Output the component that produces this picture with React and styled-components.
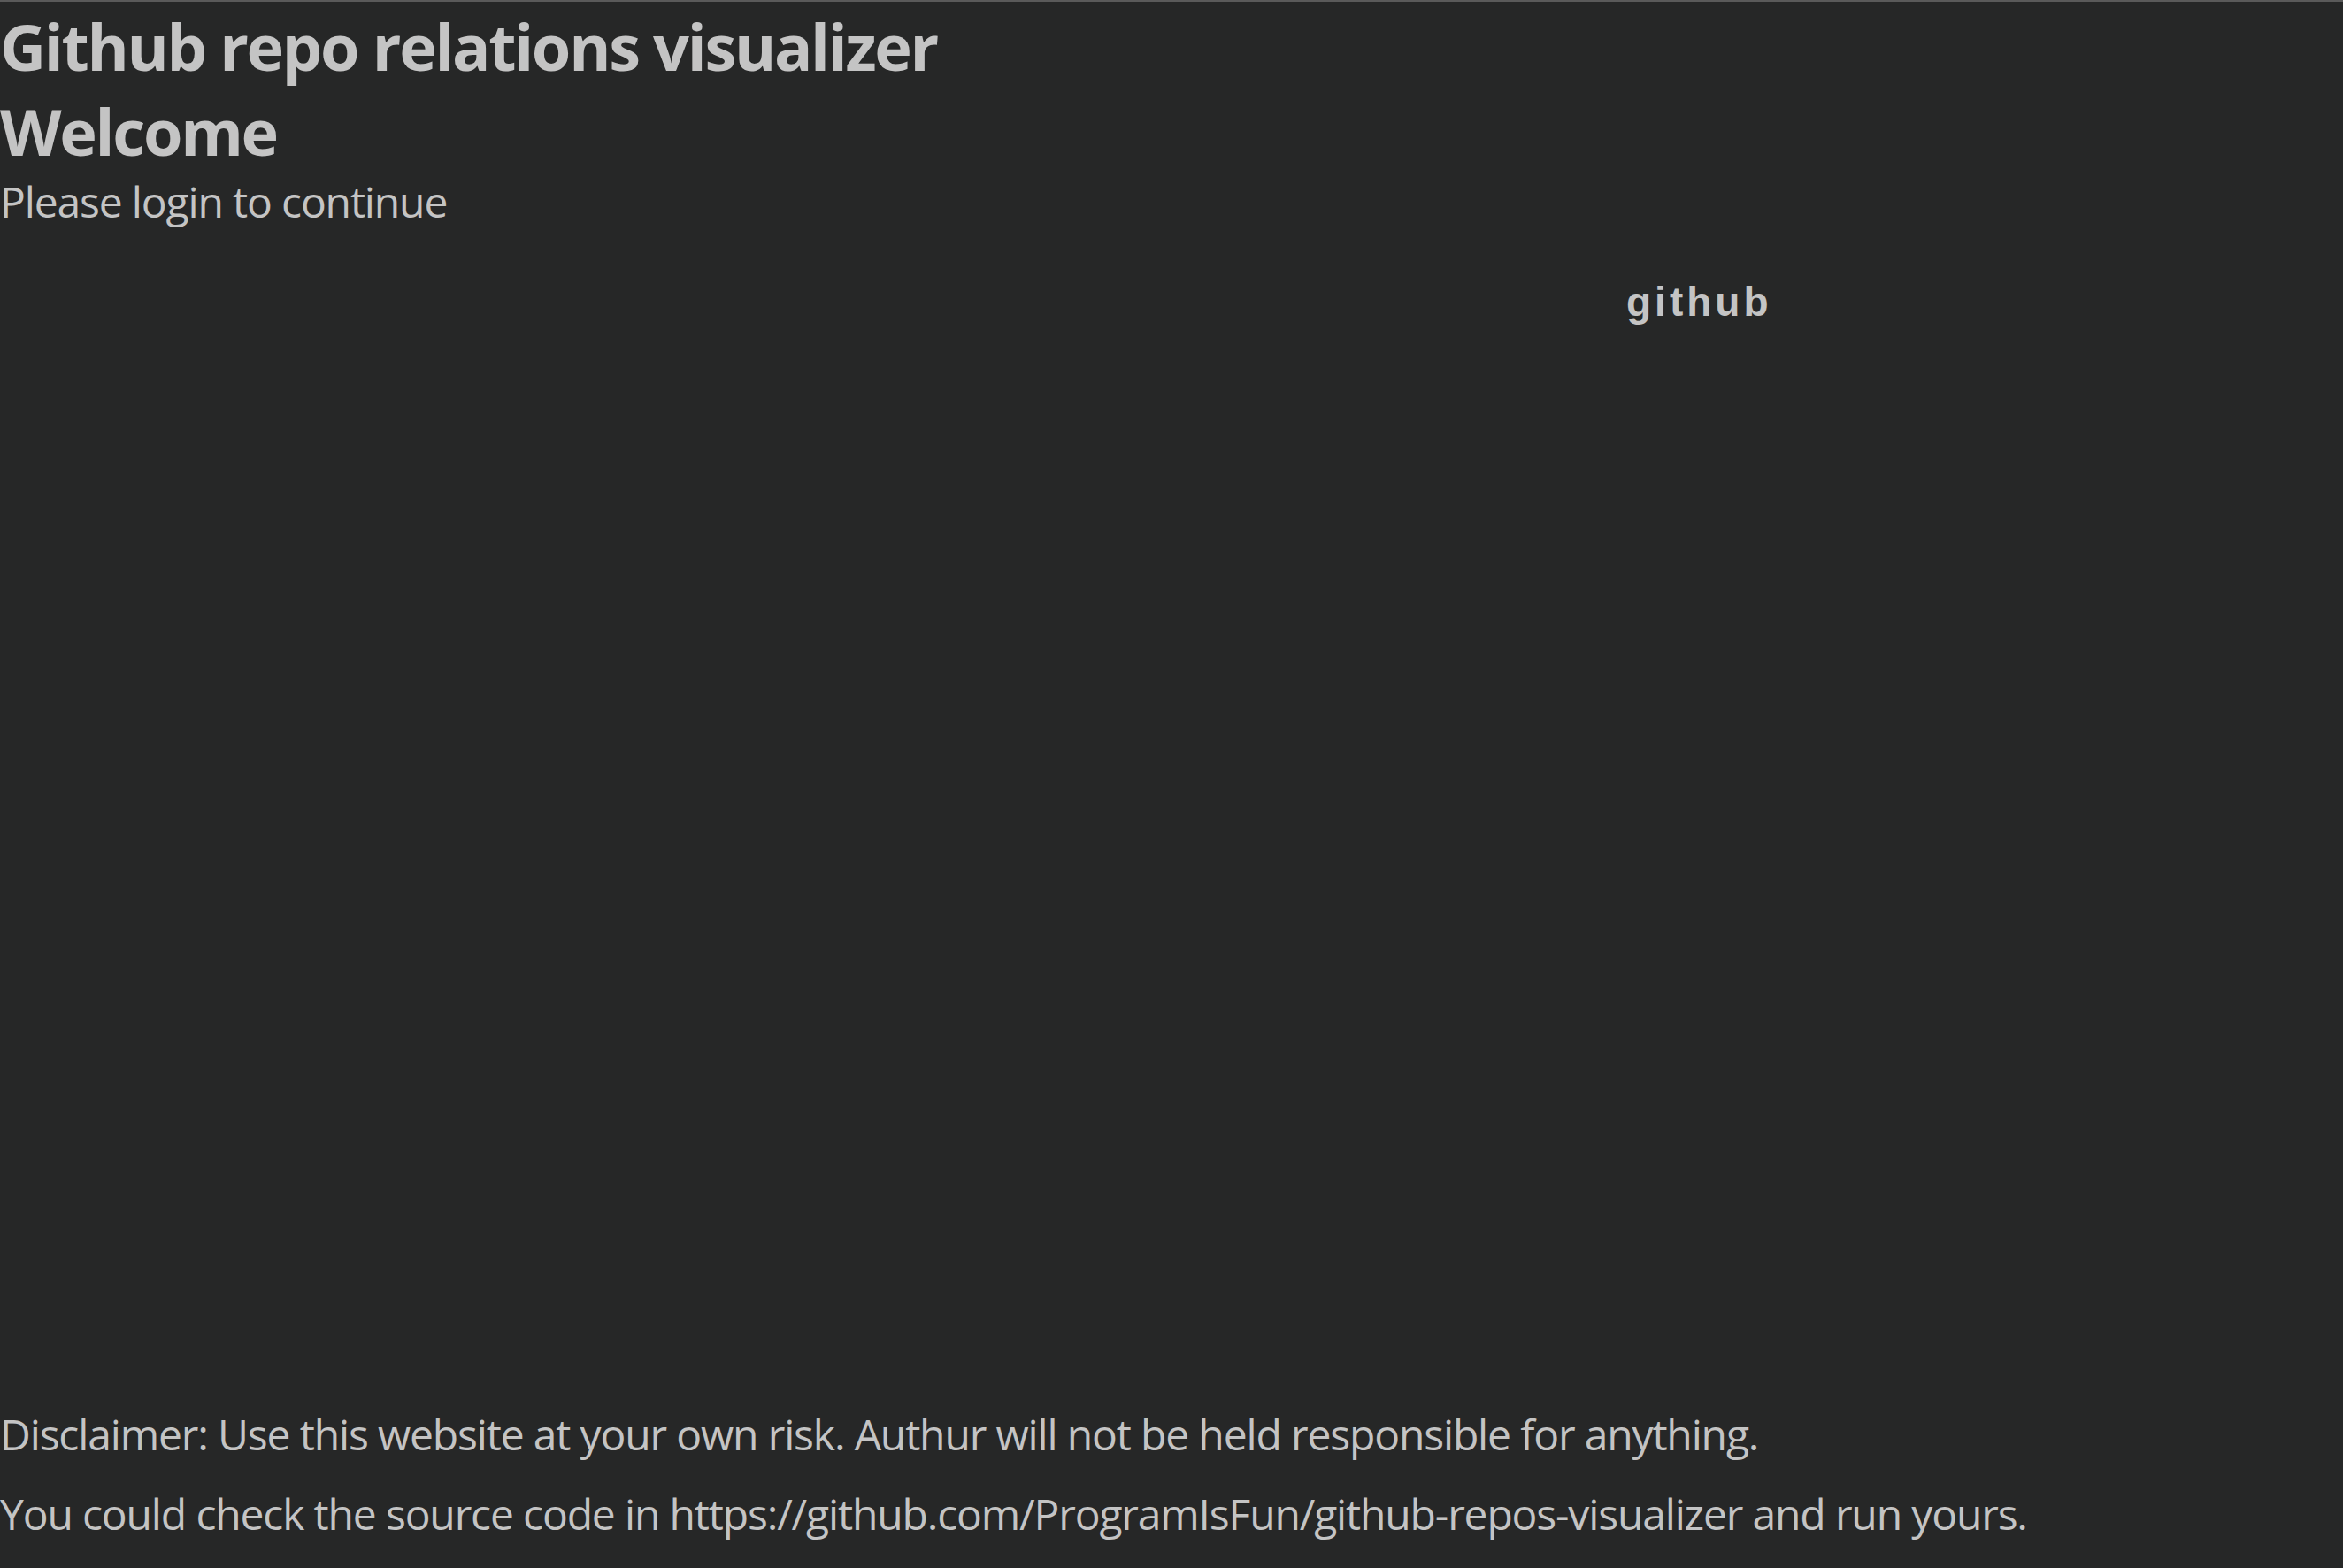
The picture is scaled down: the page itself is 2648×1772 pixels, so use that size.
import React from "react";
import styled, { createGlobalStyle } from "styled-components";

const GlobalStyle = createGlobalStyle`
    html, body {
        margin: 0;
        padding: 0;
        background: #262727;
    }
    * {
        box-sizing: border-box;
    }
`;

const Page = styled.div`
    display: flex;
    flex-direction: column;
    min-height: 100vh;
    border-top: 2px solid #5a5a5a;
    background: #262727;
    color: #c4c4c4;
    font-family: "Open Sans", "Noto Sans", sans-serif;
`;

const Header = styled.header`
    display: flex;
    flex-direction: column;
    padding-top: 2px;
`;

const Title = styled.h2`
    margin: 0;
    font-size: 72px;
    line-height: 96px;
    font-weight: 700;
    letter-spacing: -2.3px;
`;

const Text = styled.p`
    margin: 0;
    font-size: 48px;
    line-height: 64px;
    font-weight: 400;
    letter-spacing: -1.15px;
`;

const LoginRow = styled.div`
    display: flex;
    padding-top: 55px;
`;

const LoginButton = styled.button`
    margin-left: 1838px;
    padding: 0;
    border: none;
    background: transparent;
    color: #c4c4c4;
    font-family: "Liberation Sans", Arial, sans-serif;
    font-size: 46px;
    line-height: 52px;
    font-weight: 700;
    letter-spacing: 4px;
    cursor: pointer;
`;

const Footer = styled.footer`
    display: flex;
    flex-direction: column;
    gap: 26px;
    margin-top: auto;
    padding-bottom: 29px;
`;

const App = () => {
    return (
        <>
            <GlobalStyle />
            <Page>
                <Header>
                    <Title>Github repo relations visualizer</Title>
                    <Title>Welcome</Title>
                    <Text>Please login to continue</Text>
                </Header>
                <LoginRow>
                    <LoginButton>github</LoginButton>
                </LoginRow>
                <Footer>
                    <Text>Disclaimer: Use this website at your own risk. Authur will not be held responsible for anything.</Text>
                    <Text>You could check the source code in https://github.com/ProgramIsFun/github-repos-visualizer and run yours.</Text>
                </Footer>
            </Page>
        </>
    );
};

export default App;
